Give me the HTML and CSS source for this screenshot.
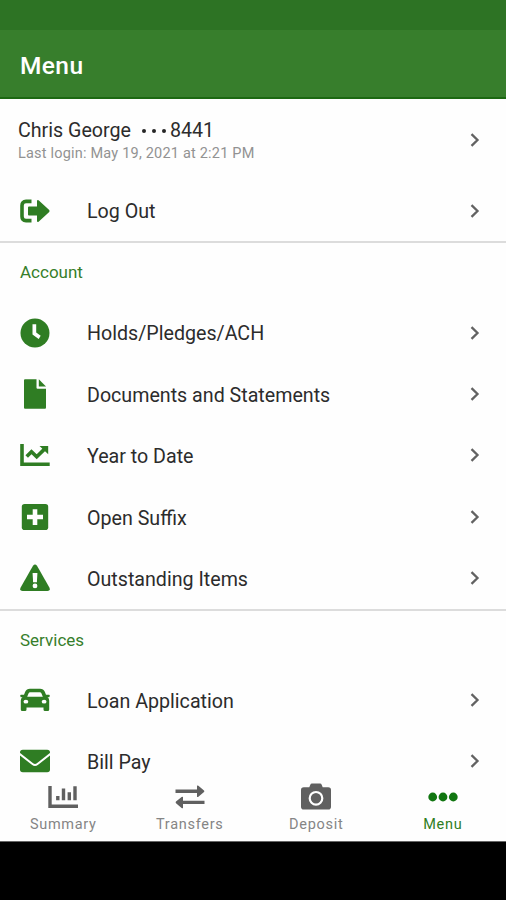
FILE: index.html
```html
<!DOCTYPE html>
<html lang="en">
<head>
    <meta charset="UTF-8">
    <meta name="viewport" content="width=device-width, initial-scale=1.0">
    <title>Menu</title>
    <link rel="stylesheet" href="styles.css">
</head>
<body>

<div class="status-bar"></div>
<header class="header">
    <h1>Menu</h1>
</header>

<main class="content">
    <section class="section">
        <a class="row user">
            <div class="label">
                <div class="name"><span>Chris George</span><span class="dots"><i></i><i></i><i></i></span><span>8441</span></div>
                <div class="last-login">Last login: May 19, 2021 at 2:21 PM</div>
            </div>
            <svg class="chevron" viewBox="0 0 10 16"><path d="M1.5 2.2L7.5 8L1.5 13.8"/></svg>
        </a>
        <a class="row">
            <svg class="icon" viewBox="0 0 30 30"><path class="line" d="M11.5 5.4H6Q2 5.4 2 9.4V20.6Q2 24.6 6 24.6H11.5"/><path d="M9 10.5H17V5Q17.2 3.4 18.6 4.3L29.2 14.1Q29.9 15 29.2 15.9L18.6 25.7Q17.2 26.6 17 25V19.5H9Q8 19.5 8 18.5V11.5Q8 10.5 9 10.5Z"/></svg>
            <span class="label">Log Out</span>
            <svg class="chevron" viewBox="0 0 10 16"><path d="M1.5 2.2L7.5 8L1.5 13.8"/></svg>
        </a>
    </section>

    <section class="section">
        <h2>Account</h2>
        <a class="row">
            <svg class="icon" viewBox="0 0 30 30"><circle cx="15" cy="15" r="14.5"/><path class="white" d="M12.5 6.3H16.2V14.6L20.7 17.8L18.7 21L12.5 16.6Z"/></svg>
            <span class="label">Holds/Pledges/ACH</span>
            <svg class="chevron" viewBox="0 0 10 16"><path d="M1.5 2.2L7.5 8L1.5 13.8"/></svg>
        </a>
        <a class="row">
            <svg class="icon" viewBox="0 0 30 30"><path d="M5 0.3H16.5V8.7Q16.5 9.7 17.5 9.7H26V28.5Q26 29.7 25 29.7H5Q4 29.7 4 28.7V1.3Q4 0.3 5 0.3Z"/><path d="M18.8 0.3L26 7.4H18.8Z"/></svg>
            <span class="label">Documents and Statements</span>
            <svg class="chevron" viewBox="0 0 10 16"><path d="M1.5 2.2L7.5 8L1.5 13.8"/></svg>
        </a>
        <a class="row">
            <svg class="icon" viewBox="0 0 30 30"><path class="line" d="M2 4V24.2H29.7"/><path class="line" d="M6.7 16.5L11.5 11.7L16.7 16.7L25 8.6"/><path d="M19.5 5.9H28.2V14.2Z"/></svg>
            <span class="label">Year to Date</span>
            <svg class="chevron" viewBox="0 0 10 16"><path d="M1.5 2.2L7.5 8L1.5 13.8"/></svg>
        </a>
        <a class="row">
            <svg class="icon" viewBox="0 0 30 30"><rect x="1.8" y="2" width="26.4" height="26" rx="2.8"/><path class="white" d="M12.7 7.2H17.3V12.7H23V17.3H17.3V23H12.7V17.3H7V12.7H12.7Z"/></svg>
            <span class="label">Open Suffix</span>
            <svg class="chevron" viewBox="0 0 10 16"><path d="M1.5 2.2L7.5 8L1.5 13.8"/></svg>
        </a>
        <a class="row">
            <svg class="icon" viewBox="0 0 30 30"><path d="M13 2.8Q15 0.2 17 2.8L29.5 24.8Q30.6 28 27.5 28H2.5Q-0.6 28 0.5 24.8Z"/><path class="white" d="M12.6 10H17.4L16.9 19.2H13.1Z"/><circle class="white" cx="15" cy="22.9" r="2.4"/></svg>
            <span class="label">Outstanding Items</span>
            <svg class="chevron" viewBox="0 0 10 16"><path d="M1.5 2.2L7.5 8L1.5 13.8"/></svg>
        </a>
    </section>

    <section class="section">
        <h2>Services</h2>
        <a class="row">
            <svg class="icon" viewBox="0 0 30 30"><path fill-rule="evenodd" d="M10 3.7H20Q23.5 3.7 24.8 6.8L26 9.8H29Q30 9.8 29.7 10.9L29.3 12.2H27.5Q29.2 13.3 29.2 15.5V24.5Q29.2 26 27.8 26H25Q23.5 26 23.5 24.5V22.4H6.5V24.5Q6.5 26 5 26H2.2Q0.8 26 0.8 24.5V15.5Q0.8 13.3 2.5 12.2H0.7L0.3 10.9Q0 9.8 1 9.8H4L5.2 6.8Q6.5 3.7 10 3.7ZM10.2 7.3Q9 7.3 8.5 8.5L7.2 11.7H22.8L21.5 8.5Q21 7.3 19.8 7.3Z"/><ellipse class="white" cx="5.9" cy="16.7" rx="2.4" ry="1.9"/><ellipse class="white" cx="24.1" cy="16.7" rx="2.4" ry="1.9"/></svg>
            <span class="label">Loan Application</span>
            <svg class="chevron" viewBox="0 0 10 16"><path d="M1.5 2.2L7.5 8L1.5 13.8"/></svg>
        </a>
        <a class="row">
            <svg class="icon" viewBox="0 0 30 30"><rect x="0" y="3.8" width="30" height="22.5" rx="2.8"/><path class="fold" d="M-0.5 7.8L12.5 18Q15 20 17.5 18L30.5 7.8"/></svg>
            <span class="label">Bill Pay</span>
            <svg class="chevron" viewBox="0 0 10 16"><path d="M1.5 2.2L7.5 8L1.5 13.8"/></svg>
        </a>
    </section>
</main>

<nav class="tabs">
    <a class="tab">
        <svg viewBox="0 0 30 30"><path class="line" d="M2 4V24.2H30"/><path class="line" d="M9.8 14V18.3M15.5 6.5V18.3M21.3 10.3V18.3M27 4.3V18.3"/></svg>
        <span>Summary</span>
    </a>
    <a class="tab">
        <svg viewBox="0 0 30 30"><path class="line" d="M0.5 9.2H23M29.5 20.4H7"/><path d="M22 3.7Q22.6 3.2 23.4 3.7L29 8.4Q29.8 9.2 29 10L23.4 14.8Q22.6 15.3 22 14.8ZM8 14.9Q7.4 14.4 6.6 14.9L1 19.6Q0.2 20.4 1 21.2L6.6 26Q7.4 26.5 8 26Z"/></svg>
        <span>Transfers</span>
    </a>
    <a class="tab">
        <svg viewBox="0 0 30 30"><path d="M2.8 5.2H8.3L9.2 2.9Q9.7 1.6 11 1.6H19Q20.3 1.6 20.8 2.9L21.7 5.2H27.2Q30 5.2 30 8V24.8Q30 27.6 27.2 27.6H2.8Q0 27.6 0 24.8V8Q0 5.2 2.8 5.2Z"/><circle class="ring" cx="15" cy="16.3" r="6.3"/></svg>
        <span>Deposit</span>
    </a>
    <a class="tab active">
        <svg viewBox="0 0 30 30"><circle cx="4.7" cy="15" r="4.4"/><circle cx="15" cy="15" r="4.4"/><circle cx="25.3" cy="15" r="4.4"/></svg>
        <span>Menu</span>
    </a>
</nav>
<div class="system-bar"></div>

</body>
</html>
```
FILE: styles.css
```css
/* Mobile banking menu */

* {
    box-sizing: border-box;
}
body {
    font-family: Roboto, sans-serif;
    background-color: #fefefe;
    color: #2c2c2c;
    margin: 0;
    height: 900px;
    display: flex;
    flex-direction: column;
    overflow: hidden;
}
.status-bar {
    height: 30px;
    background-color: #2d7324;
    flex-shrink: 0;
}
.header {
    height: 69px;
    padding: 0 20px;
    display: flex;
    align-items: center;
    background-color: #377e2c;
    border-bottom: 2px solid #1c6812;
    flex-shrink: 0;
}
.header h1 {
    color: #fff;
    font-size: 24.5px;
    font-weight: 500;
    letter-spacing: 0.4px;
    margin: 4px 0 0;
}
.content {
    height: 680px;
    overflow: hidden;
    flex-shrink: 0;
}
.section {
    border-bottom: 2px solid #dcdcdc;
}
.section:last-child {
    border-bottom: none;
}
.section h2 {
    height: 58.5px;
    line-height: 59px;
    margin: 0;
    padding-left: 20px;
    color: #377e2c;
    font-size: 17px;
    font-weight: 400;
}
.row {
    height: 61.4px;
    padding: 0 26px 0 20px;
    display: flex;
    align-items: center;
}
.row.user {
    height: 81px;
    padding-left: 18px;
}
.label {
    flex: 1;
    font-size: 19.65px;
    line-height: 24px;
    padding-top: 3.6px;
}
.user .label {
    padding-top: 5px;
}
.name {
    display: flex;
    align-items: center;
    line-height: 24px;
}
.dots {
    display: flex;
    gap: 6px;
    margin: 0 4px 0 11px;
}
.dots i {
    width: 4px;
    height: 4px;
    border-radius: 50%;
    background-color: #262626;
}
.last-login {
    color: #929292;
    font-size: 14.5px;
    line-height: 22px;
    letter-spacing: 0.2px;
}
.icon {
    width: 30px;
    height: 30px;
    margin-right: 37px;
    fill: #2f7d23;
}
.icon .line {
    fill: none;
    stroke: #2f7d23;
    stroke-width: 3.6;
}
.icon .white {
    fill: #fff;
}
.icon .fold {
    fill: none;
    stroke: #fff;
    stroke-width: 2;
}
.chevron {
    width: 10px;
    height: 16px;
    fill: none;
    stroke: #626262;
    stroke-width: 2.3;
}

/* bottom tabs */
.tabs {
    height: 62px;
    display: grid;
    grid-template-columns: repeat(4, 1fr);
    background-color: #fefefe;
    flex-shrink: 0;
}
.tab {
    display: flex;
    flex-direction: column;
    align-items: center;
    padding-top: 3px;
    color: #858585;
    font-size: 14.5px;
    line-height: 20px;
    letter-spacing: 0.7px;
}
.tab svg {
    width: 30px;
    height: 30px;
    fill: #606060;
}
.tab span {
    margin-top: 3px;
}
.tab .line {
    fill: none;
    stroke: #606060;
    stroke-width: 3.4;
}
.tab .ring {
    fill: none;
    stroke: #fff;
    stroke-width: 2.2;
}
.tab.active {
    color: #2f7d23;
}
.tab.active svg {
    fill: #117611;
}
.system-bar {
    flex: 1;
    background-color: #000;
    border-top: 1px solid #666;
}
```
